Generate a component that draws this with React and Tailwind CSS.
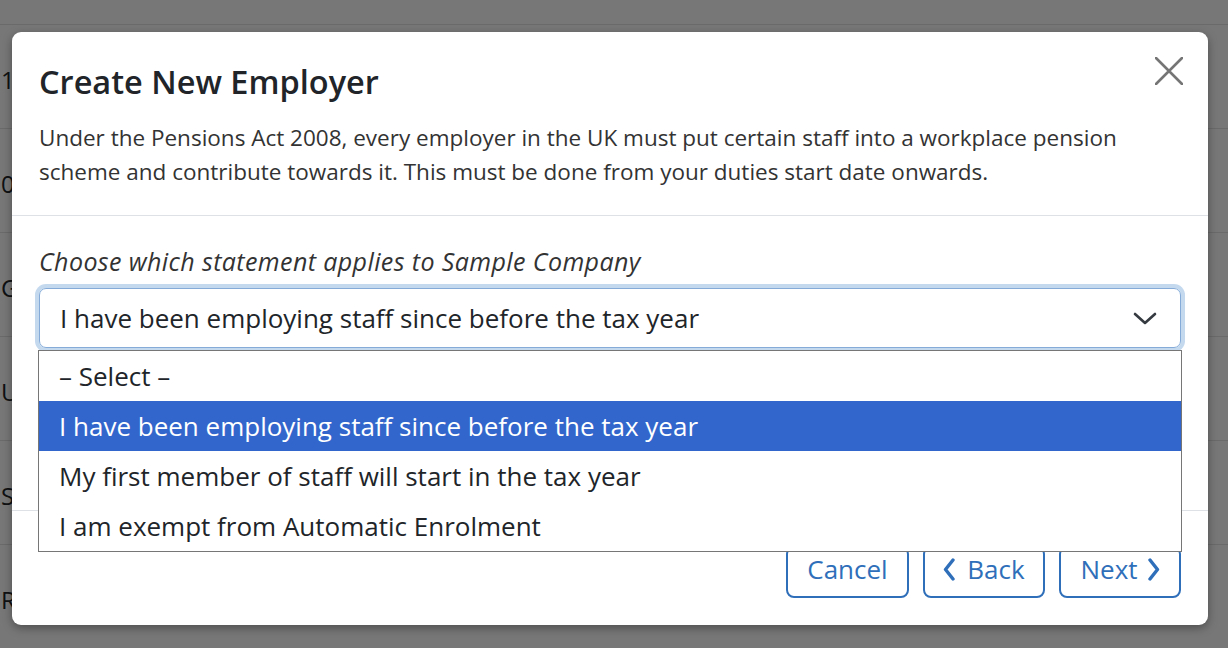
import React from "react";

const rows = ["1", "0", "G", "U", "S", "R"];

const options = [
  "– Select –",
  "I have been employing staff since before the tax year",
  "My first member of staff will start in the tax year",
  "I am exempt from Automatic Enrolment",
];

function CloseIcon() {
  return (
    <svg width="28" height="28" viewBox="0 0 28 28" fill="none">
      <path d="M1 1L27 27M27 1L1 27" stroke="#757575" strokeWidth="2.6" strokeLinecap="round" />
    </svg>
  );
}

function Chevron({ dir = "down", className = "" }) {
  const d = {
    down: "M2 2L12 11L22 2",
    left: "M10 2L2.5 11.5L10 21",
    right: "M2 2L9.5 11.5L2 21",
  }[dir];
  return (
    <svg
      className={className}
      width={dir === "down" ? 24 : 12}
      height={dir === "down" ? 13 : 23}
      viewBox={dir === "down" ? "0 0 24 13" : "0 0 12 23"}
      fill="none"
    >
      <path d={d} stroke="currentColor" strokeWidth={dir === "down" ? 2.6 : 3.4} strokeLinecap="round" strokeLinejoin="round" />
    </svg>
  );
}

export default function App() {
  const selected = 1;

  return (
    <div className="relative h-[648px] w-[1228px] overflow-hidden bg-white font-['Open_Sans',sans-serif] text-[#212529]">
      {/* table behind the dialog */}
      <div className="h-[25px] border-b border-[#e3e3e3]" />
      {rows.map((r) => (
        <div key={r} className="flex h-[104px] items-center border-b border-[#e3e3e3] pt-[6px] text-[24px]">
          <span className="pl-[1px]">{r}</span>
        </div>
      ))}

      <div className="absolute inset-0 bg-black/[0.535] pl-[12px] pt-[32px]">
        <div className="relative flex w-[1196px] flex-col rounded-[9px] bg-white shadow-[0_3px_10px_rgba(0,0,0,0.35)]">
          {/* header */}
          <div className="relative border-b border-[#dee2e6] px-[27px] pb-[26px] pt-[30px]">
            <h2 className="text-[32.5px] font-semibold leading-[40px] text-[#212529]">Create New Employer</h2>
            <p className="mt-[19px] whitespace-nowrap text-[22.5px] leading-[34px] text-[#333]">
              Under the Pensions Act 2008, every employer in the UK must put certain staff into a workplace pension
              <br />
              scheme and contribute towards it. This must be done from your duties start date onwards.
            </p>
            <button type="button" className="absolute right-[25px] top-[25px]">
              <CloseIcon />
            </button>
          </div>

          {/* body */}
          <div className="relative h-[295px] border-b border-[#dee2e6] px-[27px] pt-[28px]">
            <label className="block text-[25px] italic leading-[34px] tracking-[0.4px] text-[#333]">
              Choose which statement applies to Sample Company
            </label>
            <div className="relative mt-[10px]">
              <div className="flex h-[60px] items-center justify-between rounded-[7px] border border-[#85acd9] pl-[20px] pr-[23px] shadow-[0_0_0_4px_rgba(60,130,200,0.3)]">
                <span className="text-[26px] text-[#212529]">{options[selected]}</span>
                <Chevron dir="down" className="text-[#343a40]" />
              </div>
              <ul className="absolute left-[-1px] right-[-1px] top-[62px] z-10 border border-[#767676] bg-white">
                {options.map((o, i) => (
                  <li
                    key={o}
                    className={
                      i === selected
                        ? "flex h-[50px] items-center bg-[#3266cc] pl-[20px] text-[26px] text-white"
                        : "flex h-[50px] items-center pl-[20px] text-[26px] text-[#212529]"
                    }
                  >
                    {o}
                  </li>
                ))}
              </ul>
            </div>
          </div>

          {/* footer */}
          <div className="flex justify-end gap-[14px] px-[27px] pb-[27px] pt-[35px]">
            <button type="button" className="flex h-[52px] w-[123px] items-center justify-center rounded-[8px] border-2 border-[#2f6fba] pb-[5px] text-[26px] text-[#2f6fba]">
              Cancel
            </button>
            <button type="button" className="flex h-[52px] w-[122px] items-center justify-center gap-[12px] rounded-[8px] border-2 border-[#2f6fba] pb-[5px] text-[26px] text-[#2f6fba]">
              <Chevron dir="left" />
              Back
            </button>
            <button type="button" className="flex h-[52px] w-[122px] items-center justify-center gap-[10px] rounded-[8px] border-2 border-[#2f6fba] pb-[5px] text-[26px] text-[#2f6fba]">
              Next
              <Chevron dir="right" />
            </button>
          </div>
        </div>
      </div>
    </div>
  );
}
